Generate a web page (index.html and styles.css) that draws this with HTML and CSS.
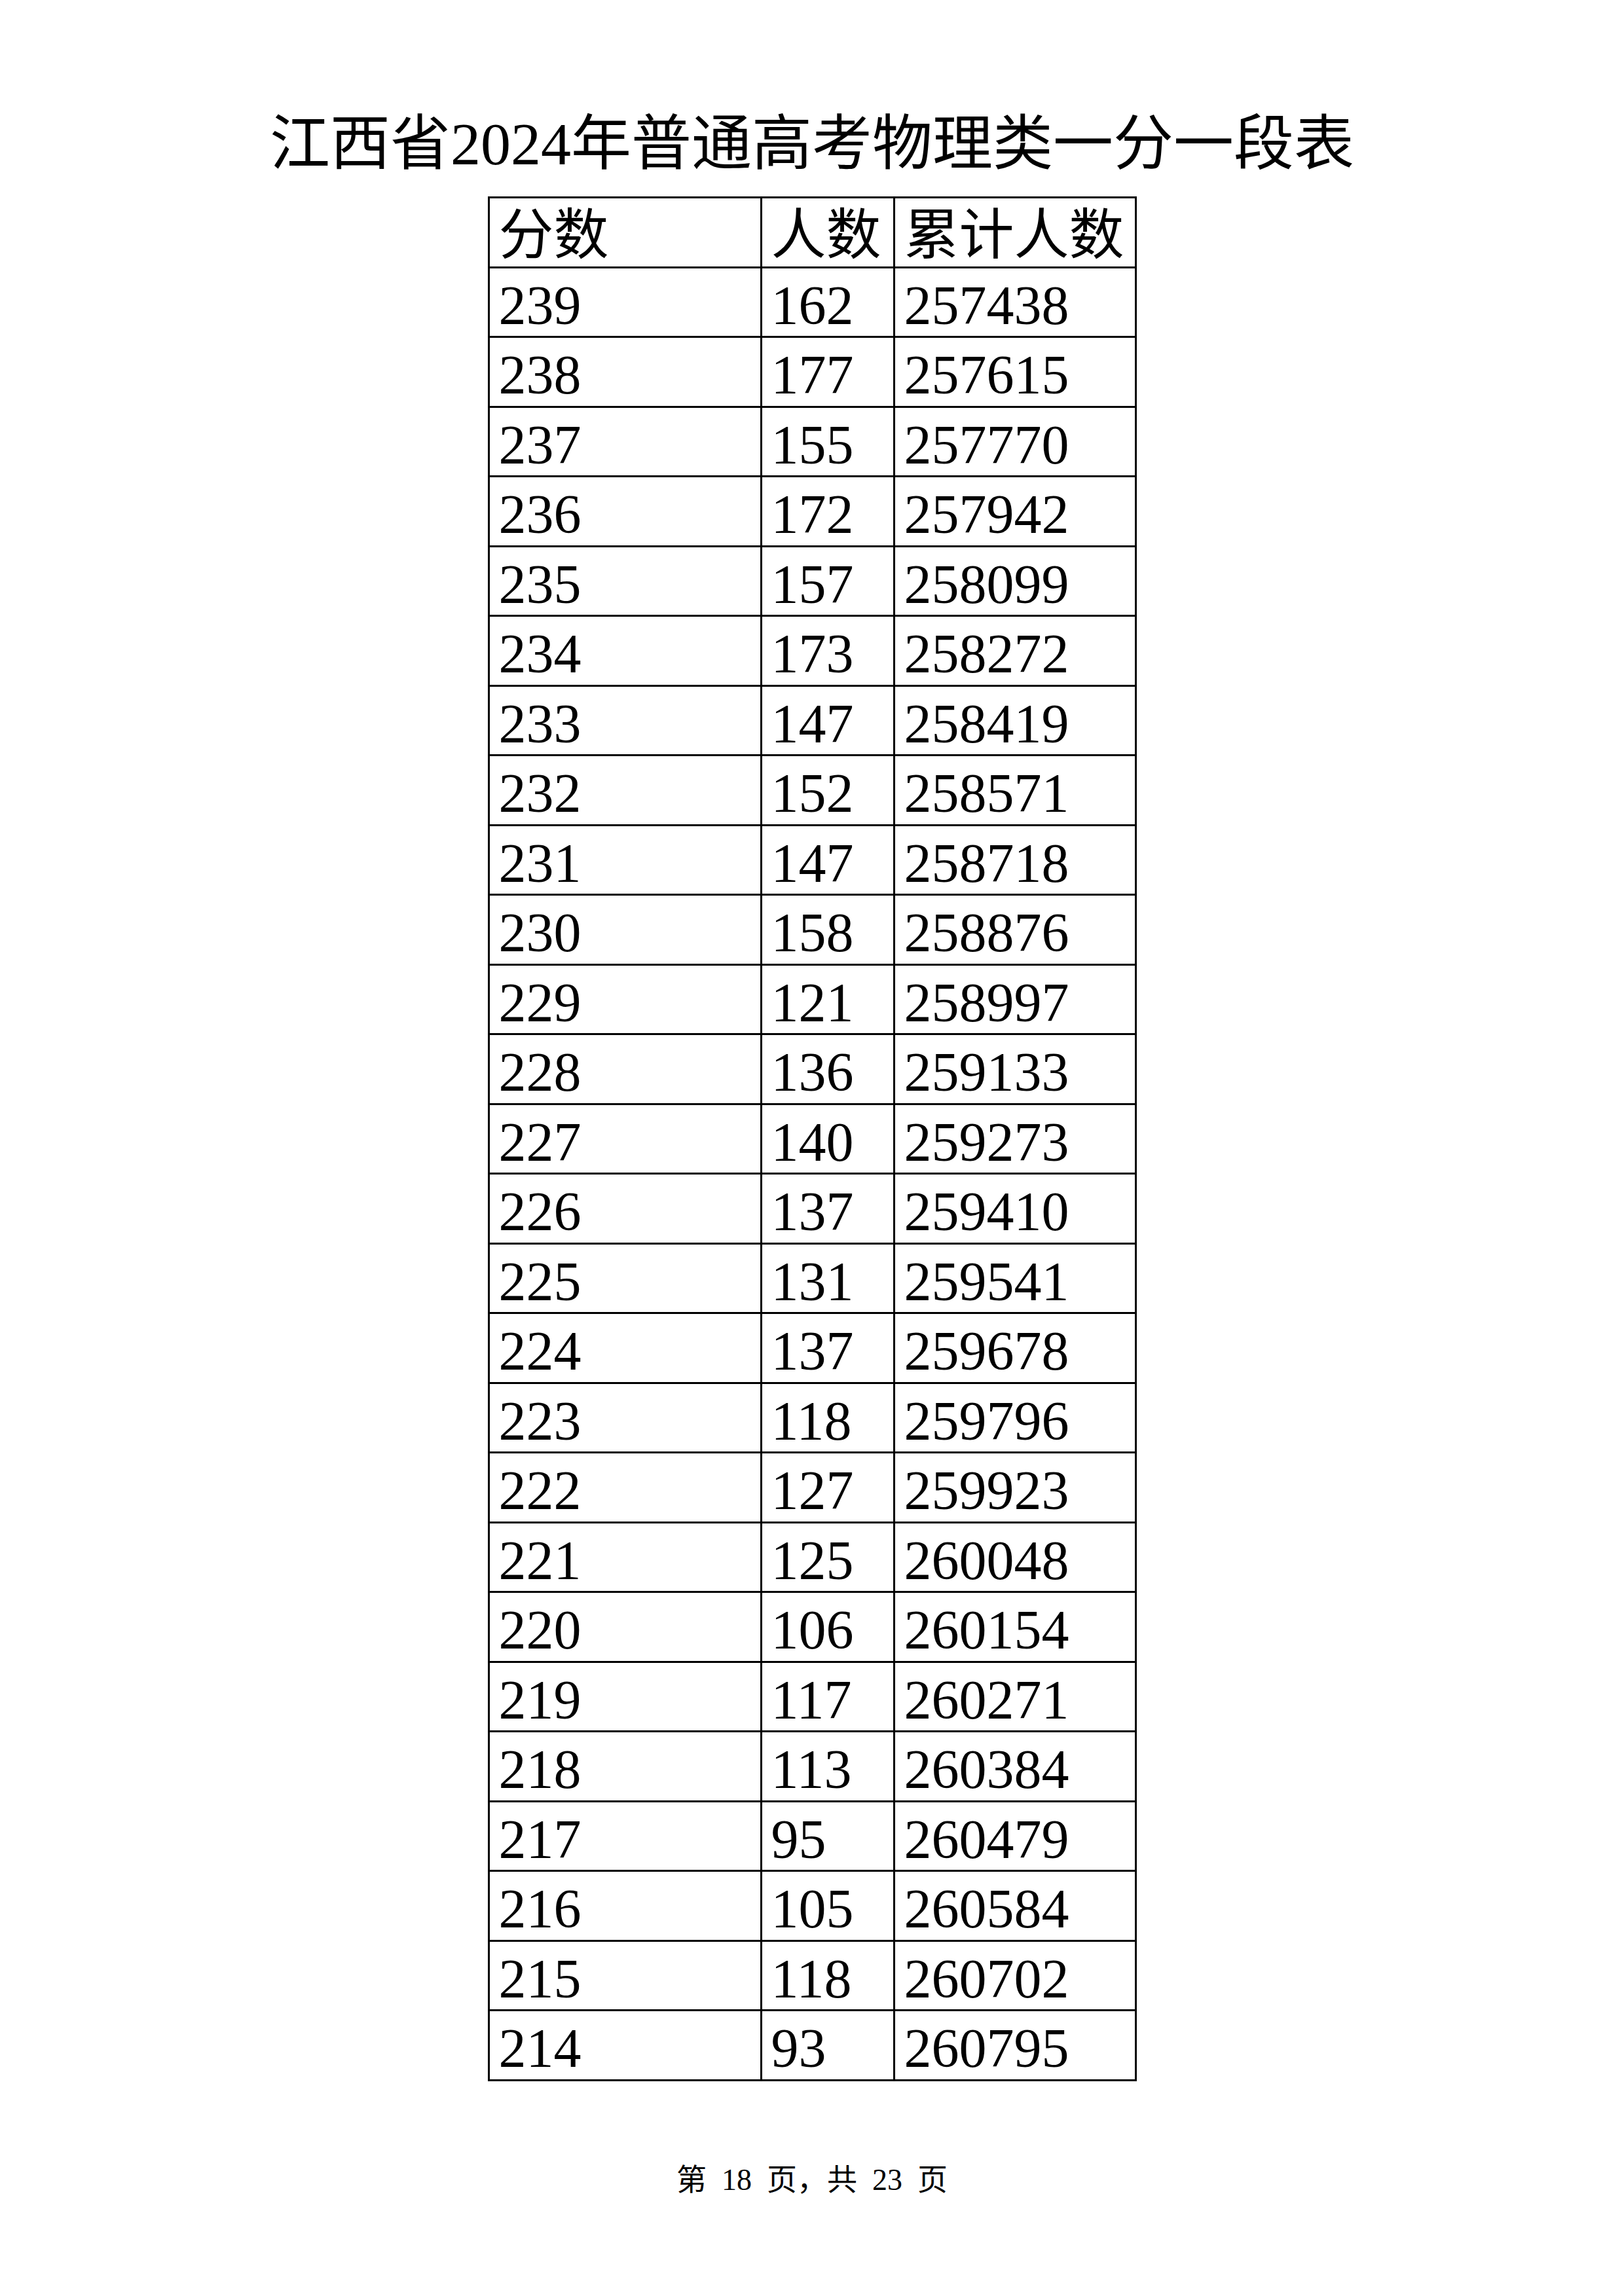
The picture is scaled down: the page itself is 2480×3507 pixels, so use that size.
FILE: index.html
```html
<!DOCTYPE html>
<html lang="zh-CN">
<head>
<meta charset="utf-8">
<title>江西省2024年普通高考物理类一分一段表</title>
<link rel="stylesheet" href="styles.css">
</head>
<body>
<div class="page">
  <h1 class="title">江西省2024年普通高考物理类一分一段表</h1>
  <table class="score-table">
    <colgroup>
      <col class="c1"><col class="c2"><col class="c3">
    </colgroup>
    <thead>
      <tr><th>分数</th><th>人数</th><th>累计人数</th></tr>
    </thead>
    <tbody>
      <tr><td>239</td><td>162</td><td>257438</td></tr>
      <tr><td>238</td><td>177</td><td>257615</td></tr>
      <tr><td>237</td><td>155</td><td>257770</td></tr>
      <tr><td>236</td><td>172</td><td>257942</td></tr>
      <tr><td>235</td><td>157</td><td>258099</td></tr>
      <tr><td>234</td><td>173</td><td>258272</td></tr>
      <tr><td>233</td><td>147</td><td>258419</td></tr>
      <tr><td>232</td><td>152</td><td>258571</td></tr>
      <tr><td>231</td><td>147</td><td>258718</td></tr>
      <tr><td>230</td><td>158</td><td>258876</td></tr>
      <tr><td>229</td><td>121</td><td>258997</td></tr>
      <tr><td>228</td><td>136</td><td>259133</td></tr>
      <tr><td>227</td><td>140</td><td>259273</td></tr>
      <tr><td>226</td><td>137</td><td>259410</td></tr>
      <tr><td>225</td><td>131</td><td>259541</td></tr>
      <tr><td>224</td><td>137</td><td>259678</td></tr>
      <tr><td>223</td><td>118</td><td>259796</td></tr>
      <tr><td>222</td><td>127</td><td>259923</td></tr>
      <tr><td>221</td><td>125</td><td>260048</td></tr>
      <tr><td>220</td><td>106</td><td>260154</td></tr>
      <tr><td>219</td><td>117</td><td>260271</td></tr>
      <tr><td>218</td><td>113</td><td>260384</td></tr>
      <tr><td>217</td><td>95</td><td>260479</td></tr>
      <tr><td>216</td><td>105</td><td>260584</td></tr>
      <tr><td>215</td><td>118</td><td>260702</td></tr>
      <tr><td>214</td><td>93</td><td>260795</td></tr>
    </tbody>
  </table>
  <p class="footer">第&ensp;18&ensp;页，共&ensp;23&ensp;页</p>
</div>
</body>
</html>
```

FILE: styles.css
```css
html, body {
  margin: 0;
  padding: 0;
  background: #ffffff;
}

body {
  font-family: "Liberation Serif", "Noto Sans CJK SC", serif;
  color: #000000;
}

.page {
  width: 2480px;
  padding-top: 170px;
  box-sizing: border-box;
}

.title {
  margin: 0;
  font-size: 92px;
  line-height: 100px;
  font-weight: normal;
  text-align: center;
}

.score-table {
  margin: 30px auto 0;
  width: 988px;
  border-collapse: collapse;
  table-layout: fixed;
}

.c1 { width: 416px; }
.c2 { width: 203px; }
.c3 { width: 369px; }

.score-table th,
.score-table td {
  border: 3px solid #000000;
  padding: 10px 0 0 14px;
  font-size: 84px;
  line-height: 93.5px;
  font-weight: normal;
  text-align: left;
  vertical-align: top;
  white-space: nowrap;
}

.footer {
  margin: 121px 0 0;
  font-size: 46px;
  line-height: 60px;
  text-align: center;
}
```
